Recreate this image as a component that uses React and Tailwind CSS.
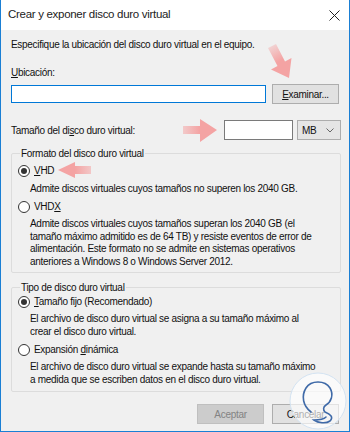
import React from "react";

function Radio({ checked }) {
  return (
    <span className="w-[12px] h-[12px] rounded-full border border-[#333] bg-white flex items-center justify-center shrink-0">
      {checked && <span className="w-[6px] h-[6px] rounded-full bg-[#333]" />}
    </span>
  );
}

function Overlay() {
  return (
    <svg className="absolute -left-px top-0 pointer-events-none" width="350" height="432" viewBox="0 0 350 432">
      <defs>
        <linearGradient id="a1" x1="270" y1="46" x2="288" y2="77" gradientUnits="userSpaceOnUse">
          <stop offset="0" stopColor="#f4a3a3" stopOpacity="0.35" />
          <stop offset="0.5" stopColor="#f4a3a3" />
        </linearGradient>
        <linearGradient id="a2" x1="183" y1="0" x2="217" y2="0" gradientUnits="userSpaceOnUse">
          <stop offset="0" stopColor="#f4a3a3" stopOpacity="0.5" />
          <stop offset="0.5" stopColor="#f4a3a3" />
        </linearGradient>
        <linearGradient id="a3" x1="92" y1="0" x2="58" y2="0" gradientUnits="userSpaceOnUse">
          <stop offset="0" stopColor="#f4a3a3" stopOpacity="0.5" />
          <stop offset="0.5" stopColor="#f4a3a3" />
        </linearGradient>
      </defs>
      {/* arrows */}
      <polygon fill="url(#a1)" points="276,44 285,61.5 291.5,58 289,78 271,69.5 277.5,66 268,48" />
      <polygon fill="url(#a2)" points="183,126 200,126 200,119 217,130 200,142 200,134 183,134" />
      <polygon fill="url(#a3)" points="91,166 75,166 75,162 58,170 75,178 75,174 91,174" />
      {/* watermark */}
      <circle cx="318" cy="401" r="28" fill="#ffffff" fillOpacity="0.65" stroke="#d3e3f2" strokeWidth="1" />
      <path
        d="M311 412 C 303 406, 301 396, 306 388 C 311 380, 325 380, 330 388 C 334 395, 331 402, 326 405 C 323 407, 323 410, 325 412 C 330 414, 334 417, 330 421 C 326 424, 318 423, 314 420 C 318 420, 324 419, 326 417"
        fill="none"
        stroke="#3f6aa8"
        strokeWidth="1.6"
        strokeLinecap="round"
      />
    </svg>
  );
}

export default function App() {
  return (
    <div className="w-[350px] h-[432px] relative overflow-hidden bg-[#f0f0f0] border-x border-b border-[#1a7fd4] font-['Liberation_Sans',Arial,sans-serif] text-[10px] tracking-[-0.3px] text-[#111]">
      {/* Title bar */}
      <div className="h-[30px] bg-white flex items-center justify-between pl-[7px] pr-[9px]">
        <span className="text-[11.5px] text-[#222]">Crear y exponer disco duro virtual</span>
        <svg width="11" height="11" viewBox="0 0 11 11">
          <path d="M0.5 0.5 L10.5 10.5 M10.5 0.5 L0.5 10.5" stroke="#222" strokeWidth="1" />
        </svg>
      </div>

      <div className="pl-[10px] pt-[8px]">
        <p className="leading-[13px]">Especifique la ubicación del disco duro virtual en el equipo.</p>
        <p className="mt-[15px] leading-[13px]">
          <span className="underline">U</span>bicación:
        </p>
        <div className="mt-[5px] flex items-center">
          <div className="w-[255px] h-[18px] bg-white border border-[#0078d7]" />
          <div className="ml-[6px] w-[67px] h-[20px] bg-[#e1e1e1] border border-[#adadad] flex items-center justify-center">
            <span>
              <span className="underline">E</span>xaminar...
            </span>
          </div>
        </div>

        <div className="mt-[16px] flex items-center h-[20px]">
          <span className="w-[213px]">
            Tamaño del di<span className="underline">s</span>co duro virtual:
          </span>
          <div className="w-[69px] h-[20px] bg-white border border-[#7a7a7a]" />
          <div className="ml-[4px] w-[44px] h-[20px] bg-[#e5e5e5] border border-[#adadad] flex items-center justify-between pl-[4px] pr-[6px]">
            <span>MB</span>
            <svg width="8" height="5" viewBox="0 0 8 5">
              <path d="M0.5 0.5 L4 4 L7.5 0.5" fill="none" stroke="#666" strokeWidth="1" />
            </svg>
          </div>
        </div>

        {/* Formato */}
        <fieldset className="mt-[7px] w-[330px] border border-[#dcdcdc] rounded-[2px] pl-[6px] pb-[4px]">
          <legend className="ml-[2px] px-[1px] leading-[13px]">Formato del disco duro virtual</legend>
          <div className="mt-[4px] flex items-center gap-[4px] h-[13px]">
            <Radio checked />
            <span>
              <span className="underline">V</span>HD
            </span>
          </div>
          <p className="mt-[5px] ml-[12px] leading-[13px]">
            Admite discos virtuales cuyos tamaños no superen los 2040 GB.
          </p>
          <div className="mt-[5px] flex items-center gap-[4px] h-[13px]">
            <Radio />
            <span>
              VHD<span className="underline">X</span>
            </span>
          </div>
          <p className="mt-[5px] ml-[12px] leading-[12.5px] whitespace-nowrap">
            Admite discos virtuales cuyos tamaños superan los 2040 GB (el
            <br />
            tamaño máximo admitido es de 64 TB) y resiste eventos de error de
            <br />
            alimentación. Este formato no se admite en sistemas operativos
            <br />
            anteriores a Windows 8 o Windows Server 2012.
          </p>
        </fieldset>

        {/* Tipo */}
        <fieldset className="mt-[8px] w-[330px] border border-[#dcdcdc] rounded-[2px] pl-[6px] pb-[5px]">
          <legend className="ml-[2px] px-[1px] leading-[13px]">Tipo de disco duro virtual</legend>
          <div className="mt-[1px] flex items-center gap-[4px] h-[13px]">
            <Radio checked />
            <span>
              <span className="underline">T</span>amaño fijo (Recomendado)
            </span>
          </div>
          <p className="mt-[5px] ml-[12px] leading-[12.5px] whitespace-nowrap">
            El archivo de disco duro virtual se asigna a su tamaño máximo al
            <br />
            crear el disco duro virtual.
          </p>
          <div className="mt-[5px] flex items-center gap-[4px] h-[13px]">
            <Radio />
            <span>
              Expansión <span className="underline">d</span>inámica
            </span>
          </div>
          <p className="mt-[5px] ml-[12px] leading-[12.5px] whitespace-nowrap">
            El archivo de disco duro virtual se expande hasta su tamaño máximo
            <br />
            a medida que se escriben datos en el disco duro virtual.
          </p>
        </fieldset>

        <div className="mt-[12px] flex pl-[186px] gap-[8px]">
          <div className="w-[67px] h-[20px] bg-[#cccccc] border border-[#bfbfbf] text-[#838383] flex items-center justify-center">
            Aceptar
          </div>
          <div className="w-[67px] h-[20px] bg-[#e1e1e1] border border-[#adadad] flex items-center justify-center">
            Cancelar
          </div>
        </div>
      </div>

      <Overlay />
    </div>
  );
}
